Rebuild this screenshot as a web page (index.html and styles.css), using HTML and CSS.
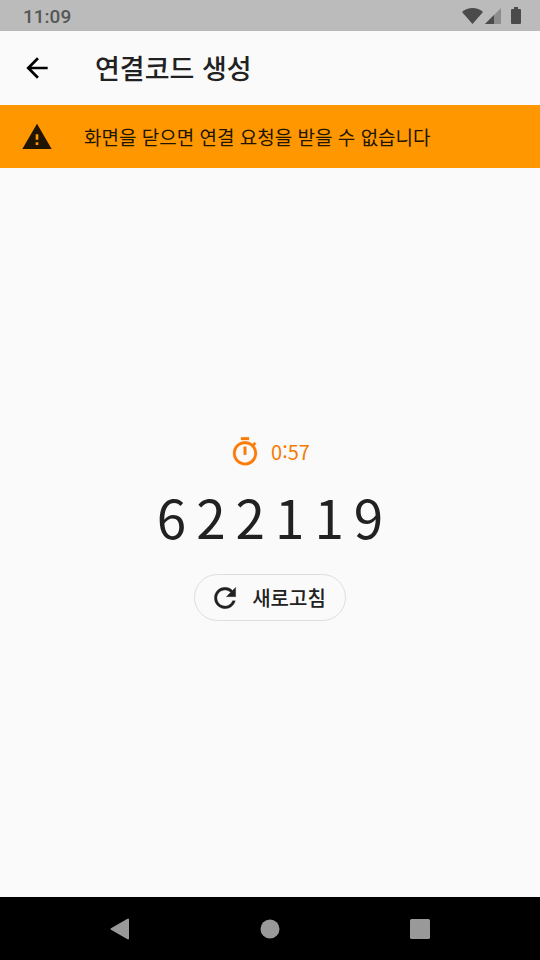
FILE: index.html
```html
<!DOCTYPE html>
<html lang="ko">
<head>
<meta charset="utf-8">
<meta name="viewport" content="width=device-width, initial-scale=1">
<title>연결코드 생성</title>
<link rel="stylesheet" href="styles.css">
</head>
<body>
<div class="status-bar">
  <span class="clock">11:09</span>
  <div class="status-icons">
    <svg class="wifi" viewBox="0 0 21 16" width="21" height="16"><path d="M10.500 16L0 4C3 1.300 6.500 0 10.500 0S18 1.300 21 4z" fill="#4b4b4b"/></svg>
    <svg class="signal" viewBox="0 0 16 16" width="16" height="16"><path d="M16 0v16H0z" fill="#8d8d8d"/><path d="M9 7v9H0z" fill="#4b4b4b"/></svg>
    <svg class="battery" viewBox="0 0 10 17" width="10" height="17"><path d="M3 0h4v2h2q1 0 1 1v13q0 1-1 1H1q-1 0-1-1V3q0-1 1-1h2z" fill="#4b4b4b"/></svg>
  </div>
</div>
<header class="app-bar">
  <button class="back" type="button" aria-label="뒤로">
    <svg viewBox="0 0 24 24" width="32" height="32"><path d="M20 11H7.830l5.590-5.590L12 4l-8 8 8 8 1.410-1.410L7.830 13H20z" fill="#000"/></svg>
  </button>
  <h1 class="title">연결코드 생성</h1>
</header>
<div class="banner" role="alert">
  <svg class="banner-icon" viewBox="0 0 24 24" width="32" height="32"><path d="M1 21h22L12 2 1 21zm12-3h-2v-2h2v2zm0-4h-2v-4h2v4z" fill="#211400"/></svg>
  <p class="banner-text">화면을 닫으면 연결 요청을 받을 수 없습니다</p>
</div>
<main class="content">
  <div class="timer">
    <svg viewBox="0 0 24 24" width="32" height="32"><path d="M15 1H9v2h6V1zm-4 13h2V8h-2v6zm8.030-6.610l1.420-1.420c-.43-.51-.9-.99-1.410-1.410l-1.420 1.420C16.070 4.740 14.120 4 12 4c-4.970 0-9 4.030-9 9s4.020 9 9 9 9-4.030 9-9c0-2.120-.74-4.070-1.970-5.610zM12 20c-3.870 0-7-3.130-7-7s3.130-7 7-7 7 3.130 7 7-3.130 7-7 7z" fill="#fb7b07" stroke="#fb7b07" stroke-width=".2"/></svg>
    <span>0:57</span>
  </div>
  <div class="code">622119</div>
  <button class="refresh" type="button">
    <svg viewBox="0 0 24 24" width="32" height="32"><path d="M17.650 6.350C16.200 4.900 14.210 4 12 4c-4.420 0-7.990 3.580-7.990 8s3.570 8 7.990 8c3.730 0 6.840-2.550 7.730-6h-2.080c-.82 2.330-3.040 4-5.650 4-3.310 0-6-2.690-6-6s2.690-6 6-6c1.660 0 3.140.69 4.220 1.780L13 11h7V4l-2.350 2.350z" fill="#212121" stroke="#212121" stroke-width=".2"/></svg>
    <span>새로고침</span>
  </button>
</main>
<nav class="nav-bar">
  <button type="button" aria-label="이전"><svg viewBox="0 0 20 22" width="20" height="22"><path d="M18 1.500v19L1.500 11z" fill="#999" stroke="#999" stroke-width="2" stroke-linejoin="round"/></svg></button>
  <button type="button" aria-label="홈"><svg viewBox="0 0 20 20" width="20" height="20"><circle cx="10" cy="10" r="9.500" fill="#999"/></svg></button>
  <button type="button" aria-label="최근 앱"><svg viewBox="0 0 20 20" width="20" height="20"><rect width="20" height="20" rx="1.500" fill="#999"/></svg></button>
</nav>
</body>
</html>
```
FILE: styles.css
```css
* {
  box-sizing: border-box;
}

body {
  margin: 0;
  min-height: 100vh;
  display: flex;
  flex-direction: column;
  background: #fafafa;
  color: #212121;
  font-family: "Noto Sans CJK KR", sans-serif;
}

svg {
  display: block;
  flex: none;
}

button {
  display: flex;
  align-items: center;
  justify-content: center;
  padding: 0;
  border: 0;
  background: none;
  color: inherit;
  font: inherit;
}

.status-bar {
  display: flex;
  align-items: center;
  justify-content: space-between;
  height: 31px;
  padding: 0 19px 0 23px;
  background: #bbb;
}

.clock {
  padding-top: 2px;
  color: #565656;
  font: 500 19px/24px Roboto, sans-serif;
}

.status-icons {
  display: flex;
  align-items: center;
}

.signal {
  margin: 0 10px 0 2px;
}

.app-bar {
  display: flex;
  align-items: center;
  height: 74px;
  padding: 0 21px;
}

.title {
  margin: 0 0 0 42px;
  font-size: 27px;
  font-weight: 500;
  line-height: 40px;
}

.banner {
  display: flex;
  align-items: center;
  gap: 31px;
  height: 63px;
  padding: 0 21px;
  background: #ff9800;
  color: #211400;
}

.banner-text {
  margin: 0;
  font-size: 19px;
  line-height: 28px;
}

.content {
  flex: 1;
  display: flex;
  flex-direction: column;
  align-items: center;
  justify-content: center;
}

.timer {
  display: flex;
  align-items: center;
  gap: 10px;
  padding-right: 1px;
  color: #f57c00;
  font-size: 20px;
  font-variant-ligatures: no-contextual;
  line-height: 32px;
}

.code {
  padding: 8px 0 10px 10px;
  font-size: 53px;
  line-height: 80px;
  letter-spacing: 10px;
}

.refresh {
  gap: 11px;
  height: 47px;
  margin: 8px 0;
  padding: 0 19px 0 14px;
  border: 1px solid #dedede;
  border-radius: 24px;
  font-size: 20px;
  font-weight: 500;
}

.nav-bar {
  display: flex;
  justify-content: center;
  height: 63px;
  background: #000;
}

.nav-bar button {
  width: 150px;
}
```
